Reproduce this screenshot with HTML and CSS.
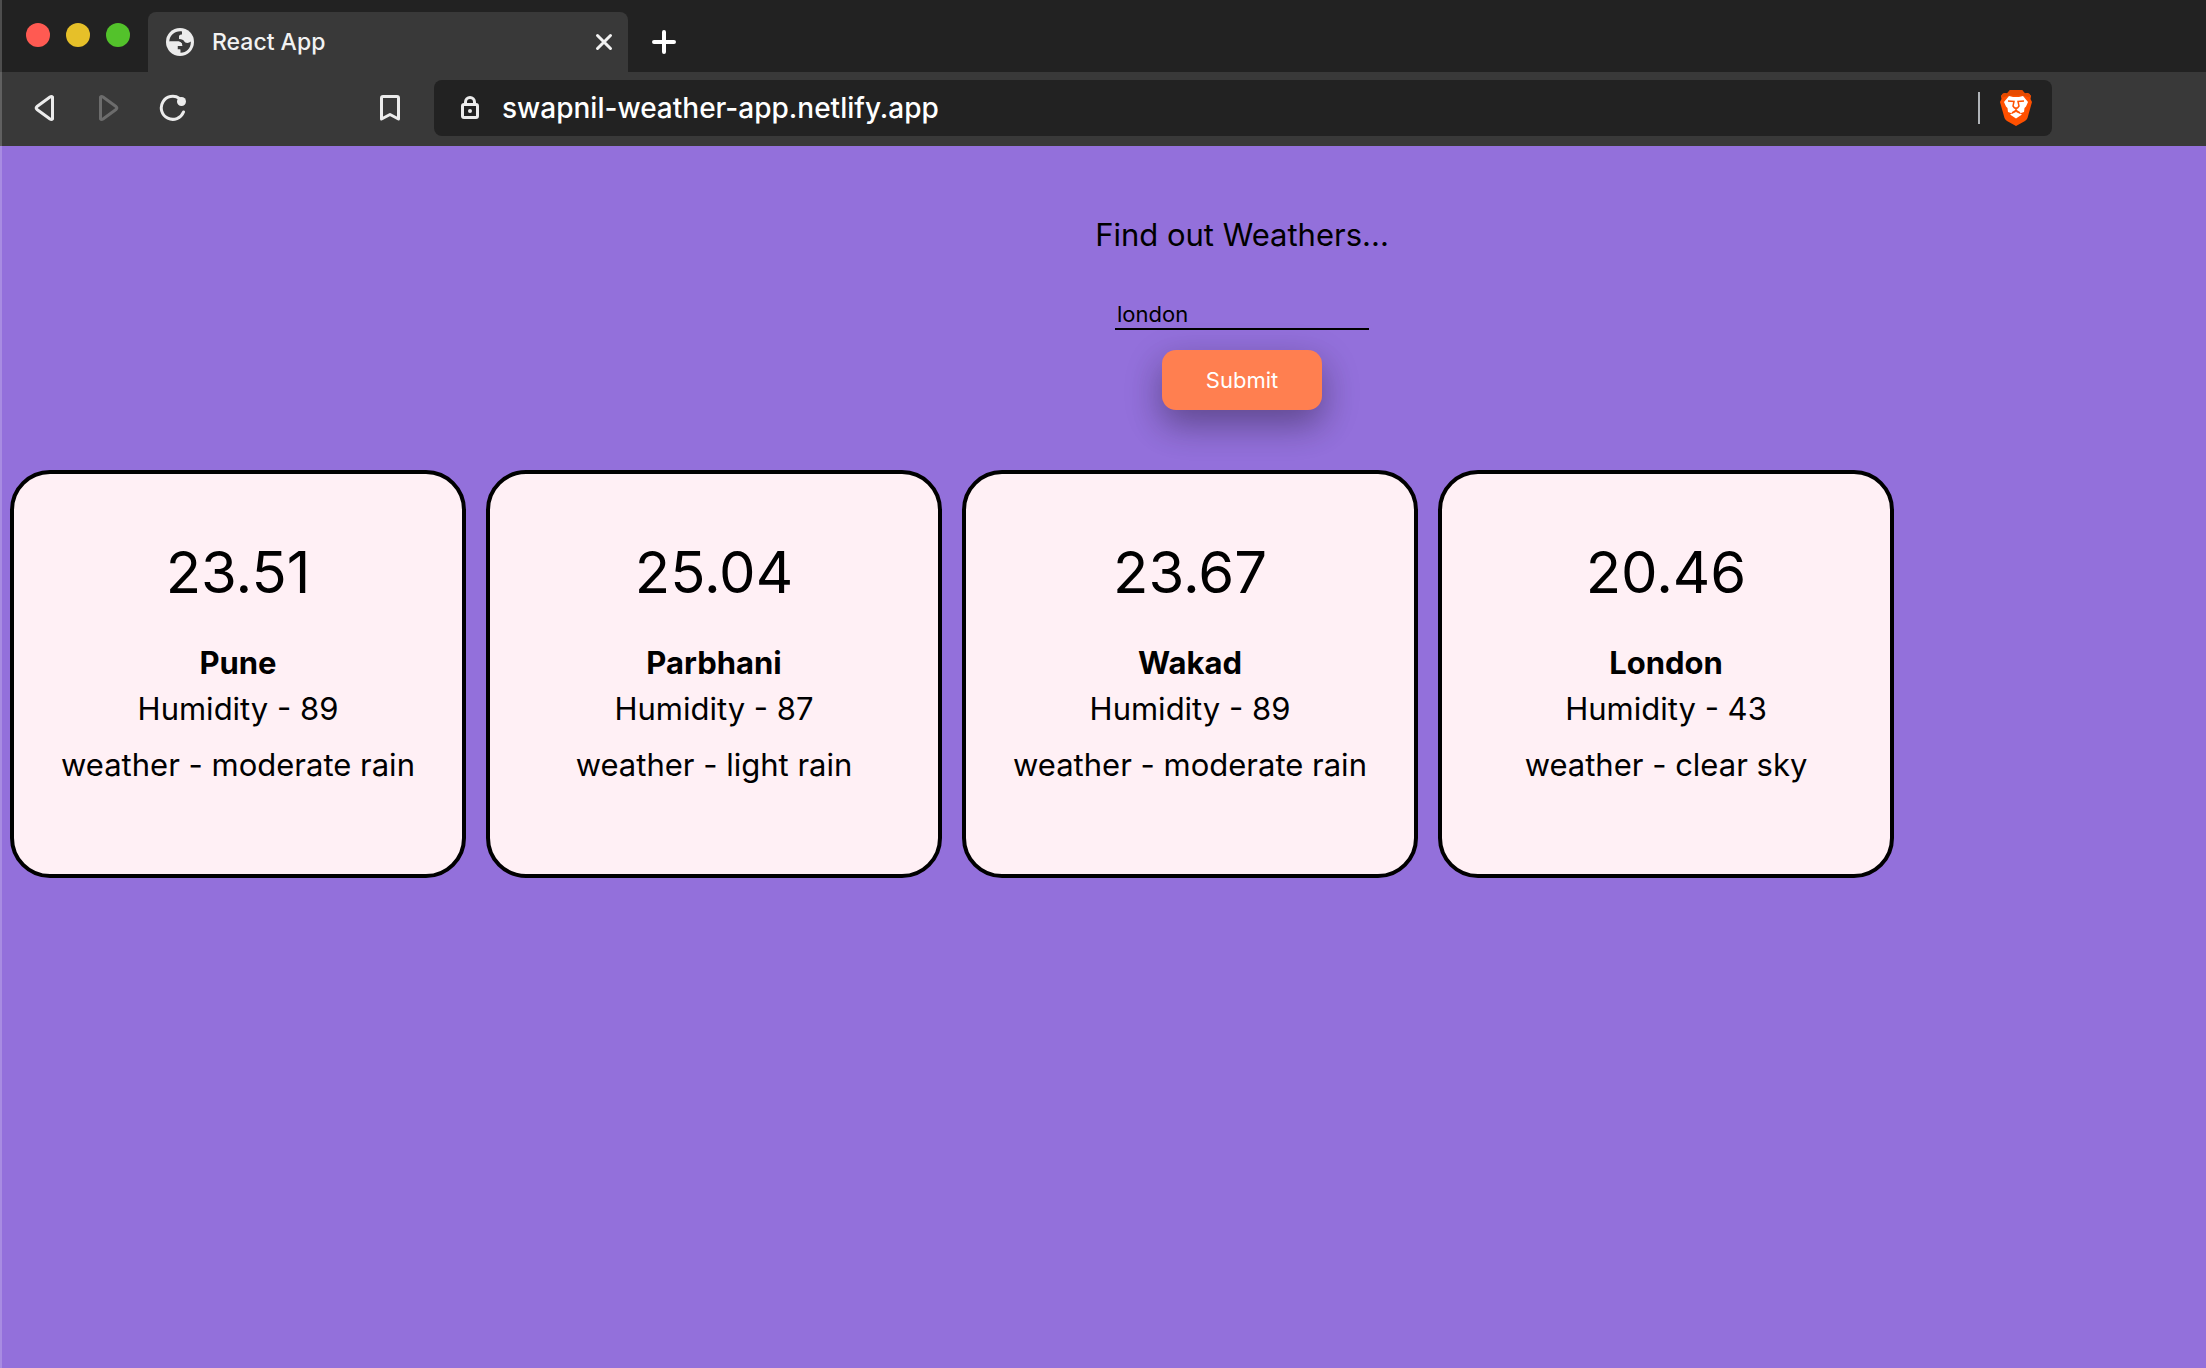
FILE: index.html
```html
<!DOCTYPE html>
<html lang="en">
<head>
<meta charset="utf-8">
<meta name="viewport" content="width=device-width, initial-scale=1">
<title>React App</title>
<link rel="stylesheet" href="styles.css">
</head>
<body>
<header class="browser">
  <div class="tab-strip">
    <div class="window-controls">
      <button class="dot dot-close" aria-label="Close window"></button>
      <button class="dot dot-minimize" aria-label="Minimize window"></button>
      <button class="dot dot-zoom" aria-label="Zoom window"></button>
    </div>
    <div class="tab">
      <svg class="favicon" width="28" height="28" viewBox="0 0 28 28" aria-hidden="true">
        <circle cx="14" cy="14" r="14" fill="#ececec"/>
        <path d="M16 3.400C9 2.500 3.500 7.500 3.300 13.500H11.500C14.500 13.500 16.500 15 16.200 18H11.500V21.500H14.500V24.700C20.500 24.700 24.800 20 24.800 14.500V13.500C23 15.500 19 15.500 18 13C17.500 11.500 16 11.500 13 11V8.500C13 7 14.500 6.500 16 6.500Z" fill="#393939"/>
        <path d="M3.300 13.500H11.500C14.500 13.500 16.500 15 16.200 18H11.500V21.500H14V24.700C8 24.700 3.300 20 3.300 13.500Z" fill="#ececec"/>
      </svg>
      <span class="tab-title">React App</span>
      <button class="icon-button" aria-label="Close tab">
        <svg width="18" height="18" viewBox="0 0 18 18" fill="none" stroke="#f2f2f2" stroke-width="3" stroke-linecap="round"><path d="M2.500 2.500L15.500 15.500M15.500 2.500L2.500 15.500"/></svg>
      </button>
    </div>
    <button class="icon-button new-tab" aria-label="New tab">
      <svg width="24" height="24" viewBox="0 0 24 24" fill="none" stroke="#fff" stroke-width="4" stroke-linecap="round"><path d="M12 2V22M2 12H22"/></svg>
    </button>
  </div>
  <div class="toolbar">
    <div class="nav-buttons">
      <button class="icon-button" aria-label="Back">
        <svg width="28" height="28" viewBox="0 0 28 28" fill="none" stroke="#ececec" stroke-width="3" stroke-linejoin="round"><path d="M21.500 3V25Q20.500 26 19 25L6 15.500Q4.500 14 6 12.500L19 3Q20.500 2 21.500 3Z"/></svg>
      </button>
      <button class="icon-button" aria-label="Forward" disabled>
        <svg width="28" height="28" viewBox="0 0 28 28" fill="none" stroke="#6c6c6c" stroke-width="3" stroke-linejoin="round"><path d="M5.500 3V25Q6.500 26 8 25L21 15.500Q22.500 14 21 12.500L8 3Q6.500 2 5.500 3Z"/></svg>
      </button>
      <button class="icon-button" aria-label="Reload">
        <svg width="28" height="28" viewBox="0 0 28 28"><path d="M20.500 4.500A11.500 11.500 0 1 0 24.500 18" fill="none" stroke="#ececec" stroke-width="3" stroke-linecap="round"/><circle cx="22.500" cy="7.500" r="4.500" fill="#ececec"/></svg>
      </button>
    </div>
    <button class="icon-button" aria-label="Bookmark this page">
      <svg width="20" height="26" viewBox="0 0 20 26" fill="none" stroke="#ececec" stroke-width="3" stroke-linejoin="round"><path d="M3 1.500H17Q18.500 1.500 18.500 3V24L10 19.500L1.500 24V3Q1.500 1.500 3 1.500Z"/></svg>
    </button>
    <div class="address">
      <svg width="18" height="24" viewBox="0 0 18 24" fill="none" stroke="#ececec" stroke-width="3" aria-hidden="true"><rect x="1.500" y="8.500" width="15" height="13" rx="1.500"/><path d="M4.500 8V6A4.500 4.500 0 0 1 13.500 6V8"/><circle cx="9" cy="15" r="2" fill="#ececec" stroke="none"/></svg>
      <input class="address-input" type="text" aria-label="Address" value="swapnil-weather-app.netlify.app">
      <button class="icon-button shields" aria-label="Brave Shields">
        <svg width="32" height="36" viewBox="0 0 32 36">
          <path d="M10 0H22L25 3.500Q29 2 31 6L30.500 9L32 12L27.500 28Q27 29.500 25 31L16 36L7 31Q5 29.500 4.500 28L0 12L1.500 9L1 6Q3 2 7 3.500Z" fill="#ff5000"/>
          <path d="M10 0H22L25 3.500Q29 2 31 6L29 7.500L23 5.500H9L3 7.500L1 6Q3 2 7 3.500Z" fill="#e64a00"/>
          <path d="M9 6L13 7H19L23 6L28 12L26 16.500L24.500 18L24 22L19.500 23.500L16 21L12.500 23.500L8 22L7.500 18L6 16.500L4 12Z" fill="#fff"/>
          <path d="M10 24.500L16 22L22 24.500L16 28.500Z" fill="#fff"/>
          <path d="M8 11L14 11.500L13 16L14.500 18H17.500L19 16L18 11.500L24 11M16 18V20.500M12 23L16 20.500L20 23" fill="none" stroke="#ff5000" stroke-width="1.500"/>
        </svg>
      </button>
    </div>
  </div>
</header>
<main class="app">
  <form class="search">
    <label class="search-title" for="city">Find out Weathers...</label>
    <input class="search-input" id="city" type="text" value="london">
    <button class="search-submit" type="button">Submit</button>
  </form>
  <section class="cards" aria-label="Weather by city">
    <article class="card">
      <p class="temperature">23.51</p>
      <h2 class="city">Pune</h2>
      <p class="detail">Humidity - 89</p>
      <p class="detail">weather - moderate rain</p>
    </article>
    <article class="card">
      <p class="temperature">25.04</p>
      <h2 class="city">Parbhani</h2>
      <p class="detail">Humidity - 87</p>
      <p class="detail">weather - light rain</p>
    </article>
    <article class="card">
      <p class="temperature">23.67</p>
      <h2 class="city">Wakad</h2>
      <p class="detail">Humidity - 89</p>
      <p class="detail">weather - moderate rain</p>
    </article>
    <article class="card">
      <p class="temperature">20.46</p>
      <h2 class="city">London</h2>
      <p class="detail">Humidity - 43</p>
      <p class="detail">weather - clear sky</p>
    </article>
  </section>
</main>
</body>
</html>
```
FILE: styles.css
```css
* {
  box-sizing: border-box;
}

body {
  margin: 0;
  min-height: 100vh;
  background: #9370db;
  color: #000;
  font-family: Inter, "Liberation Sans", sans-serif;
}

/* light edge of the window */
body::before {
  content: "";
  position: fixed;
  inset: 0 auto 0 0;
  width: 2px;
  background: rgba(255, 255, 255, 0.2);
}

button,
input {
  font-family: inherit;
  border: 0;
  padding: 0;
}

.icon-button {
  display: flex;
  background: none;
}

.tab-strip {
  display: flex;
  align-items: center;
  height: 72px;
  background: #222;
}

.window-controls {
  display: flex;
  gap: 16px;
  width: 148px;
  padding: 0 0 2px 26px;
}

.dot {
  width: 24px;
  height: 24px;
  border-radius: 50%;
}

.dot-close {
  background: #ff5a52;
}

.dot-minimize {
  background: #e6c029;
}

.dot-zoom {
  background: #53c22b;
}

.tab {
  display: flex;
  align-items: center;
  align-self: flex-end;
  width: 480px;
  height: 60px;
  padding: 0 15px 0 18px;
  border-radius: 8px 8px 0 0;
  background: #393939;
}

.tab-title {
  flex: 1;
  padding-left: 18px;
  color: #f2f2f2;
  font-size: 23px;
  font-weight: 500;
}

.new-tab {
  margin: 12px 0 0 24px;
}

.toolbar {
  display: flex;
  align-items: center;
  justify-content: space-between;
  height: 74px;
  padding: 0 154px 2px 31px;
  background: #393939;
}

.nav-buttons {
  display: flex;
  gap: 36px;
  width: 349px;
}

.address {
  display: flex;
  align-items: center;
  flex: 1;
  height: 56px;
  margin-left: 34px;
  padding: 0 20px 0 27px;
  border-radius: 8px;
  background: #222;
}

.address-input {
  flex: 1;
  margin: 0 20px 0 23px;
  background: none;
  color: #fff;
  font-size: 28px;
  font-weight: 500;
}

.shields {
  align-items: center;
}

.shields::before {
  content: "";
  width: 2px;
  height: 32px;
  margin-right: 20px;
  background: #b0b4b8;
}

.search {
  display: flex;
  flex-direction: column;
  align-items: center;
  padding: 69px 0 0 278px;
}

.search-title {
  font-size: 31px;
  line-height: 40px;
}

.search-input {
  width: 254px;
  height: 32px;
  margin-top: 43px;
  padding: 2px 2px 0;
  border-bottom: 2px solid #000;
  background: none;
  color: #000;
  font-size: 22px;
}

.search-submit {
  width: 160px;
  height: 60px;
  margin-top: 20px;
  border-radius: 14px;
  background: #ff7f50;
  box-shadow: 0 16px 32px rgba(0, 0, 0, 0.2), 0 12px 40px rgba(0, 0, 0, 0.19);
  color: #fff;
  font-size: 22px;
}

.cards {
  display: flex;
  flex-wrap: wrap;
  gap: 20px;
  padding: 60px 10px;
}

.card {
  width: 456px;
  min-height: 408px;
  padding: 62px 0 40px;
  border: 4px solid #000;
  border-radius: 40px;
  background: #fff0f5;
  text-align: center;
}

.temperature {
  margin: 0 0 32px;
  font-size: 58px;
  line-height: 72px;
}

.city {
  margin: 0;
  font-size: 31px;
  line-height: 46px;
}

.detail {
  margin: 0 0 10px;
  font-size: 31px;
  line-height: 46px;
}
```
